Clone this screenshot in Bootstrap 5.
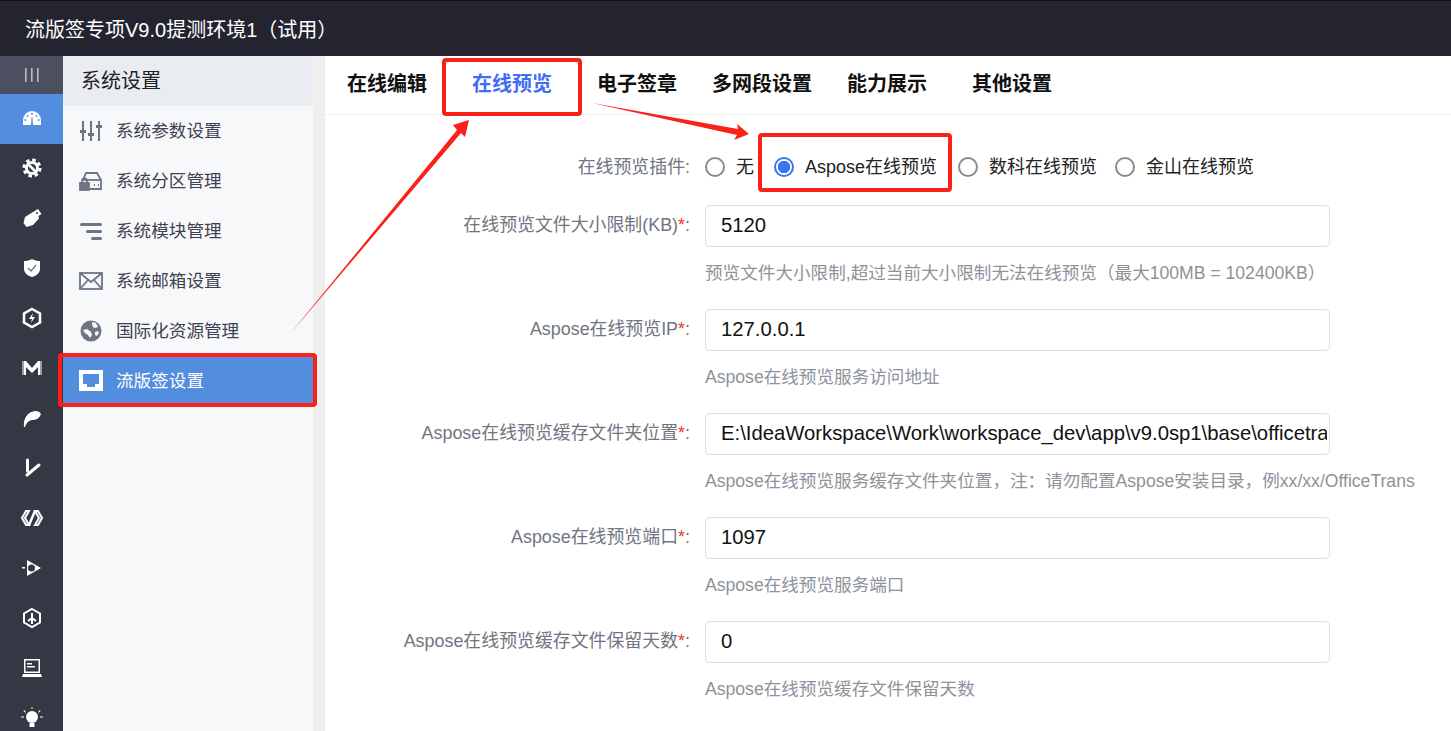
<!DOCTYPE html>
<html lang="zh">
<head>
<meta charset="utf-8">
<title>流版签设置</title>
<link href="https://cdn.jsdelivr.net/npm/bootstrap@5.3.0/dist/css/bootstrap.min.css" rel="stylesheet">
<style>
html,body{height:731px;overflow:hidden}
body{font-family:"Liberation Sans","Noto Sans CJK SC",sans-serif;background:#fff;color:#000;position:relative}
.topbar{height:56px;background:#23242f;color:#fff;font-size:20px;padding-left:25px;padding-top:2px;border-top:1px solid #111}
.shell{height:675px}
.rail{width:63px;background:#343744;flex:none;overflow:hidden}
.rail-item{height:50px;color:#fff;flex:none;padding-bottom:2px}
.rail-item svg{width:22px;height:22px}
.rail-toggle{height:38px;background:#4b4f60;color:#b9bcc6;flex:none}
.rail-active{background:#538ddd}
.subnav{width:250px;background:#f7f8fa;flex:none}
.subnav-head{height:50px;background:#e9ecf0;font-size:20px;padding-left:18px;color:#222}
.subnav-item{height:50px;font-size:17.6px;color:#3e4250;padding-left:16px;gap:13px}
.subnav-item svg{width:24px;height:24px;flex:none}
.subnav-active{background:#538ddd;color:#fff}
.gutter{width:12px;background:#efefef;flex:none}
.main{min-width:0}
.tabsbar{height:59px;border-bottom:1px solid #eee;padding-left:22px;padding-bottom:2px}
.tablink{font-size:20px;font-weight:700;color:#111;text-decoration:none;white-space:nowrap}
.tablink-on{color:#3f6ef5}
.t1{width:125px}.t2{width:125px}.t3{width:115px}.t4{width:135px}.t5{width:125px}
.formbox{padding-top:26px}
.frow{display:flex;align-items:flex-start;height:104px}
.flabel{width:365px;text-align:right;font-size:17.9px;color:#70757f;line-height:40px;flex:none;white-space:nowrap}
.req{color:#e33}
.fbody{margin-left:15px;width:625px;flex:none}
.fctl{height:42px;border-color:#dcdfe3;border-radius:5px;font-size:20.3px;padding:0 2px 2px 15px;color:#111;font-family:"Liberation Sans",sans-serif}
.fhelp{font-size:17.6px;color:#8d929b;margin-top:14px;white-space:nowrap;line-height:24px}
.radios{height:24px;font-size:18px}
.radiorow{height:64px}
.radiorow .flabel{line-height:52px}
.radio-item{display:flex;align-items:center;margin:0;gap:11px;color:#222;white-space:nowrap}
.radio-item .form-check-input{width:20px;height:20px;margin:0;border:2px solid #8a8a8a;background-color:#fff;flex:none}
.radio-item .form-check-input:checked{background-color:#fff;border-color:#3a76f0;background-image:radial-gradient(circle,#3a76f0 0 6px,transparent 6.5px)}
.r1{width:69px}.r2{width:184px}.r3{width:157px}
.radio-body{height:52px}
.overlay{position:absolute;left:0;top:0;width:1451px;height:731px;pointer-events:none}
</style>
</head>
<body>
<div class="topbar d-flex align-items-center">流版签专项V9.0提测环境1&#xFF08;试用&#xFF09;</div>
<div class="shell d-flex">
  <div class="rail d-flex flex-column">
    <div class="rail-toggle d-flex align-items-center justify-content-center"><svg width="16" height="16" viewBox="0 0 16 16" fill="currentColor"><rect x="1" y="1" width="1.6" height="14"/><rect x="7" y="1" width="1.6" height="14"/><rect x="13" y="1" width="1.6" height="14"/></svg></div>
    <div class="rail-item rail-active d-flex align-items-center justify-content-center"><svg viewBox="0 0 22 22" fill="#fff"><path d="M2 18v-5a9 9 0 0 1 18 0v5z"/><g fill="#538ddd"><circle cx="11" cy="7" r="1"/><circle cx="6.500" cy="9" r="1"/><circle cx="15.500" cy="9" r="1"/><circle cx="4.500" cy="13" r="1"/><circle cx="17.500" cy="13" r="1"/><path d="M10 18l.6-8h.8l.6 8z"/></g></svg></div>
    <div class="rail-item d-flex align-items-center justify-content-center"><svg viewBox="0 0 22 22" fill="none" stroke="#fff"><circle cx="11" cy="11" r="5.500" stroke-width="3"/><circle cx="11" cy="11" r="8" stroke-width="3" stroke-dasharray="3.500 2.780"/><path stroke-width="2.500" d="M8 8l7 7"/></svg></div>
    <div class="rail-item d-flex align-items-center justify-content-center"><svg viewBox="0 0 22 22" fill="#fff"><path d="M12 5l5-3 3.500 5-3 2 .5 2.500-6 6.500-6.500 2-3-4 1.500-6z"/><circle cx="16" cy="6" r="1" fill="#343744"/></svg></div>
    <div class="rail-item d-flex align-items-center justify-content-center"><svg viewBox="0 0 22 22"><path fill="#fff" d="M11 2c3 1.500 5 2 8 2v8c0 4-4 7-8 8-4-1-8-4-8-8V4c3 0 5-.5 8-2z"/><path fill="none" stroke="#7b7f8c" stroke-width="1.500" d="M7 11l3 3 5-6"/></svg></div>
    <div class="rail-item d-flex align-items-center justify-content-center"><svg viewBox="0 0 22 22"><path fill="none" stroke="#fff" stroke-width="2.500" d="M11 2l8 4.500v9L11 20l-8-4.500v-9z"/><path fill="#fff" d="M12 6l-4 6h3l-1 4 4-6h-3z"/></svg></div>
    <div class="rail-item d-flex align-items-center justify-content-center"><svg viewBox="0 0 22 22" fill="#fff"><path d="M1 4h4l6 7 6-7h4v14h-4v-8l-6 6-6-6v8H1z"/><path fill="#9a9ca6" d="M1 4h2v14H1zM19 4h2v14h-2z"/></svg></div>
    <div class="rail-item d-flex align-items-center justify-content-center"><svg viewBox="0 0 22 22" fill="#fff"><path d="M3 20c-1-8 3-15 11-16 3 0 5 1 6 3-1 3-4 6-8 6-4 0-6 2-8 7z"/></svg></div>
    <div class="rail-item d-flex align-items-center justify-content-center"><svg viewBox="0 0 22 22" fill="none" stroke="#fff" stroke-width="3" stroke-linecap="round"><path d="M6.500 3v11"/><path d="M6 18L18 8"/></svg></div>
    <div class="rail-item d-flex align-items-center justify-content-center"><svg viewBox="0 0 22 22" fill="none" stroke="#fff" stroke-width="2"><path d="M8 4H5L1 11l4 7h3l-4-7zM14 4h3l4 7-4 7h-3l4-7z"/><path stroke-width="2.500" d="M14 4L8 18"/></svg></div>
    <div class="rail-item d-flex align-items-center justify-content-center"><svg viewBox="0 0 22 22" fill="#fff"><path d="M6 3l14 8-14 8z"/><circle cx="10.500" cy="11" r="3.500" fill="#343744"/><rect x="1" y="10" width="3" height="1.500"/></svg></div>
    <div class="rail-item d-flex align-items-center justify-content-center"><svg viewBox="0 0 22 22" fill="none" stroke="#fff" stroke-width="2"><path d="M11 2l8 4.500v9L11 20l-8-4.500v-9z"/><path d="M11 11V6M11 11l-4 3M11 11l4 3M11 11v6"/></svg></div>
    <div class="rail-item d-flex align-items-center justify-content-center"><svg viewBox="0 0 22 22" fill="#fff"><path fill-rule="evenodd" d="M3 2h16v14H3zM4.500 3.500v11h13v-11z"/><path d="M2 17h18l1 3H1zM6 6h5v1.500H6zM6 9h8v1.500H6z"/></svg></div>
    <div class="rail-item d-flex align-items-center justify-content-center"><svg viewBox="0 0 22 22" fill="#fff"><circle cx="11" cy="10" r="6"/><rect x="8.500" y="16" width="5" height="4"/><path d="M10.500 0h1v2h-1zM0 9.500h3v1H0zM19 9.500h3v1h-3zM3 3l2 2-.7.7-2-2zM19 3l-2 2 .7.7 2-2z"/></svg></div>
  </div>
  <div class="subnav">
    <div class="subnav-head d-flex align-items-center">系统设置</div>
    <div class="subnav-item d-flex align-items-center"><svg viewBox="0 0 24 24" fill="#6d7484"><rect x="3" y="2" width="2" height="20"/><rect x="1" y="11" width="6" height="3"/><rect x="11" y="2" width="2" height="20"/><rect x="9" y="14" width="6" height="3"/><rect x="19" y="2" width="2" height="20"/><rect x="17" y="6" width="6" height="3"/></svg><span>系统参数设置</span></div>
    <div class="subnav-item d-flex align-items-center"><svg viewBox="0 0 24 24" fill="none" stroke="#6d7484" stroke-width="1.800"><path d="M4 11l3-7h11l4 7v9H11"/><path d="M4 11h18"/><rect x="1" y="14" width="9" height="7" fill="#6d7484"/><path d="M3 14v-2a2.500 2.500 0 0 1 5 0v2"/><path d="M15 16h1M19 16h1"/></svg><span>系统分区管理</span></div>
    <div class="subnav-item d-flex align-items-center"><svg viewBox="0 0 24 24" fill="#6d7484"><rect x="1" y="4" width="22" height="3" rx="1.500"/><rect x="7" y="11" width="16" height="3" rx="1.500"/><rect x="12" y="18" width="11" height="3" rx="1.500"/></svg><span>系统模块管理</span></div>
    <div class="subnav-item d-flex align-items-center"><svg viewBox="0 0 24 24" fill="none" stroke="#6d7484" stroke-width="1.800"><rect x="1" y="4" width="22" height="16"/><path d="M1 4l11 9 11-9M1 20l8-9M23 20l-8-9"/></svg><span>系统邮箱设置</span></div>
    <div class="subnav-item d-flex align-items-center"><svg viewBox="0 0 24 24"><circle cx="12" cy="12" r="10.500" fill="#6d7484"/><path fill="#f7f8fa" d="M13 3l4 1 2 4-3 1-2-1-1-3zM4 11l4-1 4 3 1 3-2 3-2-3-3-2zM16 13l3-1 1 2-2 3-2-1z"/></svg><span>国际化资源管理</span></div>
    <div class="subnav-item subnav-active d-flex align-items-center"><svg viewBox="0 0 24 24"><rect x="0" y="1" width="24" height="21" fill="#fff"/><path fill="#538ddd" d="M4 5h16v10h-4v3H8v-3H4z"/></svg><span>流版签设置</span></div>
  </div>
  <div class="gutter"></div>
  <div class="main flex-grow-1">
    <div class="tabsbar d-flex align-items-center">
      <a class="tablink t1" href="#">在线编辑</a>
      <a class="tablink tablink-on t2" href="#">在线预览</a>
      <a class="tablink t3" href="#">电子签章</a>
      <a class="tablink t4" href="#">多网段设置</a>
      <a class="tablink t5" href="#">能力展示</a>
      <a class="tablink" href="#">其他设置</a>
    </div>
    <form class="formbox">
      <div class="frow radiorow">
        <div class="flabel">在线预览插件:</div>
        <div class="fbody radio-body d-flex align-items-center">
          <div class="radios d-flex align-items-center">
            <label class="radio-item r1"><input class="form-check-input" type="radio" name="p">无</label>
            <label class="radio-item r2"><input class="form-check-input" type="radio" name="p" checked>Aspose在线预览</label>
            <label class="radio-item r3"><input class="form-check-input" type="radio" name="p">数科在线预览</label>
            <label class="radio-item"><input class="form-check-input" type="radio" name="p">金山在线预览</label>
          </div>
        </div>
      </div>
      <div class="frow">
        <div class="flabel">在线预览文件大小限制(KB)<span class="req">*</span>:</div>
        <div class="fbody"><input class="form-control fctl" value="5120"><div class="fhelp">预览文件大小限制,超过当前大小限制无法在线预览&#xFF08;最大100MB = 102400KB&#xFF09;</div></div>
      </div>
      <div class="frow">
        <div class="flabel">Aspose在线预览IP<span class="req">*</span>:</div>
        <div class="fbody"><input class="form-control fctl" value="127.0.0.1"><div class="fhelp">Aspose在线预览服务访问地址</div></div>
      </div>
      <div class="frow">
        <div class="flabel">Aspose在线预览缓存文件夹位置<span class="req">*</span>:</div>
        <div class="fbody"><input class="form-control fctl" value="E:\IdeaWorkspace\Work\workspace_dev\app\v9.0sp1\base\officetrans"><div class="fhelp">Aspose在线预览服务缓存文件夹位置&#xFF0C;注&#xFF1A;请勿配置Aspose安装目录&#xFF0C;例xx/xx/OfficeTrans</div></div>
      </div>
      <div class="frow">
        <div class="flabel">Aspose在线预览端口<span class="req">*</span>:</div>
        <div class="fbody"><input class="form-control fctl" value="1097"><div class="fhelp">Aspose在线预览服务端口</div></div>
      </div>
      <div class="frow">
        <div class="flabel">Aspose在线预览缓存文件保留天数<span class="req">*</span>:</div>
        <div class="fbody"><input class="form-control fctl" value="0"><div class="fhelp">Aspose在线预览缓存文件保留天数</div></div>
      </div>
    </form>
  </div>
</div>
<svg class="overlay" viewBox="0 0 1451 731" aria-hidden="true">
  <g fill="none" stroke="#fb2018" stroke-width="4">
    <rect x="60" y="355" width="255" height="50" rx="2"/>
    <rect x="444" y="60" width="136" height="54" rx="2"/>
    <rect x="760" y="135" width="190" height="55" rx="2"/>
  </g>
  <g fill="#fb2018">
    <path d="M290 334L457 130 453 125 469 120 465 137 461 133z"/>
    <path d="M592 103L738 129 737 124 749 134 734 140 737 135z"/>
  </g>
</svg>
<script src="https://cdn.jsdelivr.net/npm/bootstrap@5.3.0/dist/js/bootstrap.bundle.min.js"></script>
</body>
</html>
